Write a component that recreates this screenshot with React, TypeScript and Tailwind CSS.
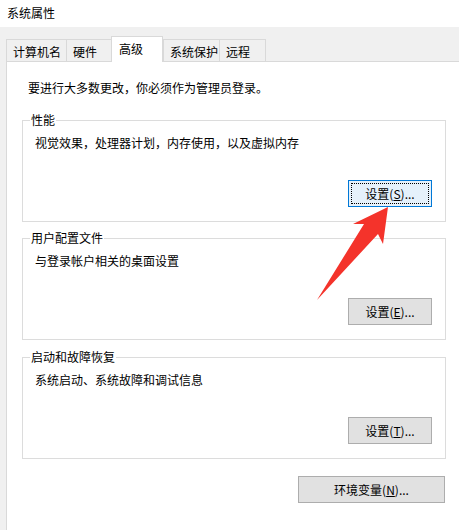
import React from "react";

const tabs = [
    { label: "计算机名", width: "w-[61px]" },
    { label: "硬件", width: "w-[46px]" },
    { label: "高级", width: "w-[52px]", active: true },
    { label: "系统保护", width: "w-[57px]" },
    { label: "远程", width: "w-[47px]" },
];

const WinButton: React.FC<{ label: string; hotkey: string; focused?: boolean; wide?: boolean }> = ({
    label,
    hotkey,
    focused,
    wide,
}) => (
    <button
        className={
            (wide ? "w-[147px] " : "w-[84px] ") +
            (focused
                ? "bg-[#e5f1fb] border-[#0078d7] outline-1 outline-dotted outline-black outline-offset-[-4px] "
                : "bg-[#e1e1e1] border-[#adadad] ") +
            "h-[27px] border text-[12px] leading-[16px] text-black flex items-center justify-center"
        }
    >
        {label}(<u>{hotkey}</u>)...
    </button>
);

const Group: React.FC<{ title: string; desc: string; button: React.ReactNode }> = ({ title, desc, button }) => (
    <fieldset className="border border-[#dcdcdc] pl-[7px] pr-[13px] pb-[14px]">
        <legend className="px-[1px] text-[12px] leading-[16px] text-black">{title}</legend>
        <div className="pl-[5px] mt-[7px] text-[12px] leading-[16px] text-black">{desc}</div>
        <div className="flex justify-end mt-[29px]">{button}</div>
    </fieldset>
);

export default function App() {
    return (
        <div
            className="relative w-[459px] h-[530px] overflow-hidden bg-[#f0f0f0] flex flex-col"
            style={{ fontFamily: '"Noto Sans CJK SC", "Noto Sans", sans-serif' }}
        >
            <div className="h-[27px] bg-white flex items-center pl-[7px] pb-[2px] text-[12px] text-black">
                系统属性
            </div>

            <div className="flex items-end pl-[6px] pt-[8px] h-[34px]">
                {tabs.map((t) =>
                    t.active ? (
                        <div
                            key={t.label}
                            className={
                                t.width +
                                " relative z-10 h-[26px] -mb-px bg-white border border-b-0 border-[#d9d9d9] pl-[7px] pt-[4px] text-[12px] leading-[16px] text-black"
                            }
                        >
                            {t.label}
                        </div>
                    ) : (
                        <div
                            key={t.label}
                            className={
                                t.width +
                                " h-[22px] bg-[#f0f0f0] border border-b-0 border-l-[#d9d9d9] border-t-[#d9d9d9] border-r-[#d9d9d9] -mr-px pl-[6px] pt-[4px] text-[12px] leading-[16px] text-black"
                            }
                        >
                            {t.label}
                        </div>
                    )
                )}
            </div>

            <div className="flex-1 ml-[6px] bg-white border-l border-t border-[#d9d9d9]">
                <div className="w-[424px] ml-[15px] pt-[18px] flex flex-col">
                    <div className="ml-[6px] text-[12px] leading-[16px] text-black">
                        要进行大多数更改，你必须作为管理员登录。
                    </div>
                    <div className="mt-[16px]">
                        <Group
                            title="性能"
                            desc="视觉效果，处理器计划，内存使用，以及虚拟内存"
                            button={<WinButton label="设置" hotkey="S" focused />}
                        />
                    </div>
                    <div className="mt-[8px]">
                        <Group
                            title="用户配置文件"
                            desc="与登录帐户相关的桌面设置"
                            button={<WinButton label="设置" hotkey="E" />}
                        />
                    </div>
                    <div className="mt-[9px]">
                        <Group
                            title="启动和故障恢复"
                            desc="系统启动、系统故障和调试信息"
                            button={<WinButton label="设置" hotkey="T" />}
                        />
                    </div>
                    <div className="flex justify-end mt-[17px] pr-px">
                        <WinButton label="环境变量" hotkey="N" wide />
                    </div>
                </div>
            </div>

            {/* red annotation arrow */}
            <svg className="absolute inset-0 pointer-events-none" width="459" height="530" viewBox="0 0 459 530">
                <polygon
                    points="388,207 383,244 378,234 317,300 364,224 353,224"
                    fill="#f4332b"
                />
            </svg>
        </div>
    );
}
